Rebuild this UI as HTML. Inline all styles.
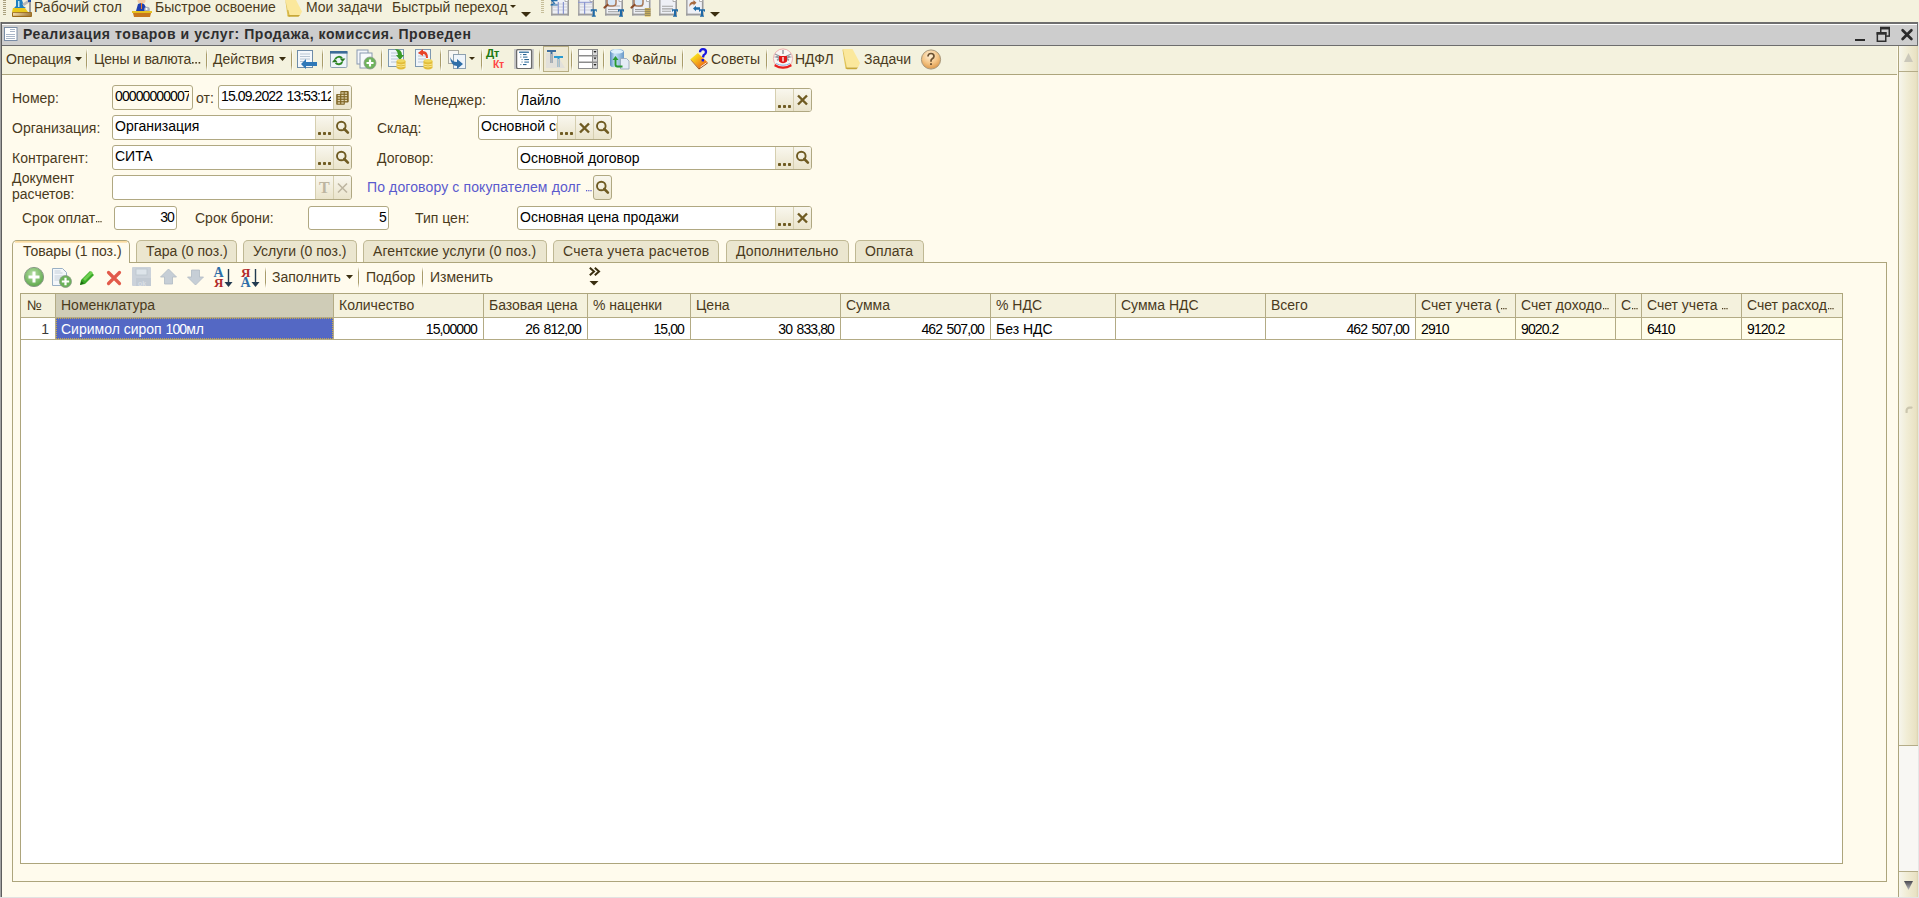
<!DOCTYPE html>
<html><head><meta charset="utf-8">
<style>
html,body{margin:0;padding:0;width:1919px;height:898px;overflow:hidden;background:#F4F2DE;position:relative}
*{box-sizing:border-box}
.a{position:absolute}
.t{position:absolute;font-family:"Liberation Sans",sans-serif;font-size:14px;line-height:16px;white-space:nowrap;color:#4A3A1C}
.v{color:#000}
.n{letter-spacing:-0.9px;word-spacing:1.5px}
.f{position:absolute;border:1px solid #B0A882;border-radius:3px;background:#fff;overflow:hidden}
.fb{position:absolute;top:0;bottom:0;width:19px;border-left:1px solid #D6CFB0;background:linear-gradient(#F9F7EE,#EAE4CC)}
.sep{position:absolute;width:1px;background:linear-gradient(rgba(170,156,106,0),#A99C6A 25%,#A99C6A 75%,rgba(170,156,106,0));box-shadow:1px 0 0 rgba(255,255,255,0.55)}
.tab{position:absolute;top:240px;height:23px;border:1px solid #BFB893;border-bottom:none;border-radius:5px 5px 0 0;background:#EBE6CF}
.th{position:absolute;top:294px;height:23px;background:#F4F1DD}
.cl{position:absolute;width:1px;background:#B3AB85}
</style></head><body>

<!-- ===== top toolbar ===== -->
<div class="a" style="left:0;top:0;width:1919px;height:22px;background:#F4F2DE"></div>
<!-- grip -->
<svg class="a" style="left:3px;top:0" width="3" height="17"><g fill="#A9A07E"><rect y="0" width="3" height="1"/><rect y="2" width="3" height="1"/><rect y="4" width="3" height="1"/><rect y="6" width="3" height="1"/><rect y="8" width="3" height="1"/><rect y="10" width="3" height="1"/><rect y="12" width="3" height="1"/><rect y="14" width="3" height="1"/></g></svg>
<!-- desk icon -->
<svg class="a" style="left:12px;top:0" width="20" height="18" viewBox="0 0 20 18">
  <path d="M4 0h6l1 3v3l3 2H2l2-2V3z" fill="#1E7FC0"/>
  <path d="M6 1h1.5v6H6z" fill="#BFE6F5"/>
  <path d="M10 4l6-4h2v2l-6 4z" fill="#B8B8B8"/>
  <rect x="16" y="0" width="3" height="2" fill="#1E4FA8"/>
  <rect x="17" y="2" width="2" height="10" fill="#9C9C9C"/>
  <path d="M1 8h12l3 4H0z" fill="#E8C81C"/>
  <defs><linearGradient id="dbg" x1="0" x2="1"><stop offset="0" stop-color="#F0D8A8"/><stop offset="1" stop-color="#A07838"/></linearGradient></defs><rect x="0" y="12" width="20" height="5" rx="1" fill="#9A6A18"/><rect x="1" y="12.8" width="18.5" height="3" fill="url(#dbg)"/>
</svg>
<div class="t" style="left:34px;top:-1px">Рабочий стол</div>
<!-- operator icon -->
<svg class="a" style="left:132px;top:0" width="21" height="18" viewBox="0 0 21 18">
  <ellipse cx="9.5" cy="1" rx="4" ry="2.5" fill="#F2C9A0"/>
  <path d="M4 11l2-7 3-1 3 1 3 5-1 3z" fill="#1F3FB0"/>
  <rect x="9" y="3" width="1" height="6" fill="#F07A20"/>
  <circle cx="15" cy="9.5" r="2.8" fill="#A8AEBA"/><circle cx="14.5" cy="9" r="1.1" fill="#FFFFFF"/>
  <path d="M0 11h20v2H0z" fill="#E6C020"/>
  <path d="M1 13h18l-1 4H2z" fill="#C8781E"/>
</svg>
<div class="t" style="left:155px;top:-1px">Быстрое освоение</div>
<!-- notes icon -->
<svg class="a" style="left:284px;top:0" width="21" height="18" viewBox="0 0 21 18">
  <path d="M1 -2h10l7 13.5-2 4H5z" fill="#FBE89C"/>
  <path d="M1 -2l4 17.5 1.5 1.5-3-0.5z" fill="#E2C558"/>
  <path d="M3.5 15.5l1.5-0.5h11l-1.5 1.8H5z" fill="#C8A838"/>
  <path d="M5 15l-1.2-5" stroke="#D0B040" stroke-width="1"/>
</svg>
<div class="t" style="left:306px;top:-1px">Мои задачи</div>
<div class="t" style="left:392px;top:-1px">Быстрый переход</div>
<svg class="a" style="left:510px;top:5px" width="6" height="3"><path d="M0 0h6L3 3z" fill="#3A2E10"/></svg>
<svg class="a" style="left:521px;top:12px" width="10" height="5"><path d="M0 0h10L5 5z" fill="#3A2E10"/></svg>
<svg class="a" style="left:541px;top:0" width="3" height="15"><g fill="#C6BE9A"><rect y="0" width="3" height="1"/><rect y="2" width="3" height="1"/><rect y="4" width="3" height="1"/><rect y="6" width="3" height="1"/><rect y="8" width="3" height="1"/><rect y="10" width="3" height="1"/><rect y="12" width="3" height="1"/></g></svg>
<!-- report icons -->
<svg class="a" style="left:545px;top:0" width="180" height="20" viewBox="0 0 180 20">
<rect x="6" y="-2" width="18" height="17.5" fill="#EEF0F6"/><rect x="6" y="-2" width="1.6" height="17.5" fill="#A8A8A8"/><rect x="6" y="13.6" width="18" height="1.9" fill="#9C9C9C"/><rect x="22.4" y="0" width="1.6" height="15.5" fill="#9A9A9A"/><path d="M20 -2v3.5h3.5" fill="#FFFFFF" stroke="#A0A0A0" stroke-width="0.8"/>
<path d="M8 4h14M8 7h14M8 10h14" stroke="#C8CAD2" stroke-width="0.9"/><rect x="12.7" y="2" width="1.2" height="12" fill="#8A96D0"/><rect x="17.8" y="2" width="1.2" height="12" fill="#8A96D0"/>
<path d="M6 0h6.5v1.2H8.2l2.3 2.2-2.8 1.2h5v0.8H5.5v-0.9l3.3-1.3L5.8 0.3z" fill="#1F6AA6"/>
<rect x="33" y="-2" width="16" height="17.5" fill="#EEF0F6"/><rect x="33" y="-2" width="1.6" height="17.5" fill="#A8A8A8"/><rect x="33" y="13.6" width="16" height="1.9" fill="#9C9C9C"/><rect x="47.4" y="0" width="1.6" height="15.5" fill="#9A9A9A"/><path d="M45 -2v3.5h3.5" fill="#FFFFFF" stroke="#A0A0A0" stroke-width="0.8"/>
<path d="M35 4h12M35 7h12M35 10h12" stroke="#C8CAD2" stroke-width="0.9"/><rect x="39" y="2" width="1.2" height="12" fill="#8A96D0"/><rect x="33" y="1.8" width="14" height="1" fill="#8A96D0"/>
<path d="M45.8 9.2 L51.8 9.2 L51.8 11.8 L51.1 11.8 L50.8 10.8 L49.8 10.8 L49.8 15.4 L50.8 15.4 L50.8 16.8 L46.8 16.8 L46.8 15.4 L47.8 15.4 L47.8 10.8 L46.8 10.8 L46.5 11.8 L45.8 11.8z" fill="#1F6AA6"/>
<rect x="60" y="-2" width="18" height="17.5" fill="#EEF0F6"/><rect x="60" y="-2" width="1.6" height="17.5" fill="#A8A8A8"/><rect x="60" y="13.6" width="18" height="1.9" fill="#9C9C9C"/><rect x="76.4" y="0" width="1.6" height="15.5" fill="#9A9A9A"/><path d="M74 -2v3.5h3.5" fill="#FFFFFF" stroke="#A0A0A0" stroke-width="0.8"/>
<path d="M63 9.5h12M63 11.8h12" stroke="#9C9C9C" stroke-width="1.1"/><path d="M70 6h5" stroke="#B0B0B0"/>
<path d="M62 -1v4q0 3 3 3h3q3 0 3-3v-4" fill="#D8E8F8" stroke="#A87858" stroke-width="1.5"/><path d="M62.5 5l-3 2.5" stroke="#8A4A28" stroke-width="2.2" stroke-linecap="round"/>
<path d="M73.0 9.2 L79.0 9.2 L79.0 11.8 L78.3 11.8 L78.0 10.8 L77.0 10.8 L77.0 15.4 L78.0 15.4 L78.0 16.8 L74.0 16.8 L74.0 15.4 L75.0 15.4 L75.0 10.8 L74.0 10.8 L73.7 11.8 L73.0 11.8z" fill="#1F6AA6"/>
<rect x="87" y="-2" width="18.5" height="17.5" fill="#EEF0F6"/><rect x="87" y="-2" width="1.6" height="17.5" fill="#A8A8A8"/><rect x="87" y="13.6" width="18.5" height="1.9" fill="#9C9C9C"/><rect x="103.9" y="0" width="1.6" height="15.5" fill="#9A9A9A"/><path d="M101.5 -2v3.5h3.5" fill="#FFFFFF" stroke="#A0A0A0" stroke-width="0.8"/>
<path d="M90 9.5h10M90 11.3h10M93 6h5" stroke="#9C9C9C" stroke-width="1"/>
<path d="M89 -1v4q0 3 3 3h3q3 0 3-3v-4" fill="#D8E8F8" stroke="#A87858" stroke-width="1.5"/><path d="M89.5 5l-3 2.5" stroke="#8A4A28" stroke-width="2.2" stroke-linecap="round"/>
<rect x="99.8" y="8" width="5.7" height="8.6" fill="#E8C860"/><path d="M99.8 9.2h5.7M99.8 11.2h5.7M99.8 13.2h5.7M99.8 15.2h5.7" stroke="#5A5A5A" stroke-width="0.8"/>
<rect x="114" y="-2" width="18" height="17.5" fill="#EEF0F6"/><rect x="114" y="-2" width="1.6" height="17.5" fill="#A8A8A8"/><rect x="114" y="13.6" width="18" height="1.9" fill="#9C9C9C"/><rect x="130.4" y="0" width="1.6" height="15.5" fill="#9A9A9A"/><path d="M128 -2v3.5h3.5" fill="#FFFFFF" stroke="#A0A0A0" stroke-width="0.8"/>
<path d="M117 6.3h11M117 8.9h11M117 11.2h9" stroke="#A4A4A4" stroke-width="1.1"/>
<path d="M127.0 9.2 L133.0 9.2 L133.0 11.8 L132.3 11.8 L132.0 10.8 L131.0 10.8 L131.0 15.4 L132.0 15.4 L132.0 16.8 L128.0 16.8 L128.0 15.4 L129.0 15.4 L129.0 10.8 L128.0 10.8 L127.7 11.8 L127.0 11.8z" fill="#1F6AA6"/>
<rect x="141" y="-2" width="17.5" height="17.5" fill="#EEF0F6"/><rect x="141" y="-2" width="1.6" height="17.5" fill="#A8A8A8"/><rect x="141" y="13.6" width="17.5" height="1.9" fill="#9C9C9C"/><rect x="156.9" y="0" width="1.6" height="15.5" fill="#9A9A9A"/><path d="M154.5 -2v3.5h3.5" fill="#FFFFFF" stroke="#A0A0A0" stroke-width="0.8"/>
<path d="M144.5 7q-1-5 4-5.5v-1.5l3 2.8-3 2.6v-1.4q-3 0-4 3z" fill="#A86A40"/>
<path d="M148 8.5l3-2.8v1.6h4v2.5h-4v1.5z" fill="#1F6AA6"/>
<path d="M154.0 9.2 L160.0 9.2 L160.0 11.8 L159.3 11.8 L159.0 10.8 L158.0 10.8 L158.0 15.4 L159.0 15.4 L159.0 16.8 L155.0 16.8 L155.0 15.4 L156.0 15.4 L156.0 10.8 L155.0 10.8 L154.7 11.8 L154.0 11.8z" fill="#1F6AA6"/>
<path d="M165 12h10l-5 4.8z" fill="#3A2E10"/>
</svg>

<!-- ===== window frame ===== -->
<div class="a" style="left:0;top:22px;width:1918px;height:876px;background:#FFFBED"></div>
<div class="a" style="left:0;top:22px;width:1918px;height:2px;background:#6E6E6E"></div>
<div class="a" style="left:2px;top:24px;width:1915px;height:1px;background:#FFFFFF"></div>
<div class="a" style="left:2px;top:25px;width:1915px;height:20px;background:#CDCDCD"></div>
<div class="a" style="left:0;top:45px;width:1918px;height:1px;background:#6D6D6D"></div>
<div class="a" style="left:0;top:22px;width:1px;height:876px;background:#A2A2A2"></div>
<div class="a" style="left:1px;top:22px;width:1px;height:876px;background:#5E5E5E"></div>
<div class="a" style="left:1917px;top:22px;width:1px;height:24px;background:#6E6E6E"></div>
<div class="a" style="left:1918px;top:22px;width:1px;height:876px;background:#E6E6E6"></div>
<div class="a" style="left:0;top:897px;width:1919px;height:1px;background:#E2E2E2"></div>
<!-- title icon -->
<svg class="a" style="left:4px;top:27px" width="14" height="14" viewBox="0 0 14 14">
  <rect x="0.5" y="0.5" width="12.5" height="13" fill="#FFFFFF" stroke="#7A8DA6"/>
  <rect x="6" y="2" width="5" height="1" fill="#A9B6C8"/>
  <rect x="6" y="4" width="5" height="1" fill="#A9B6C8"/>
  <rect x="2" y="7" width="9" height="1" fill="#A9B6C8"/>
  <rect x="2" y="9" width="9" height="1" fill="#A9B6C8"/>
  <rect x="2" y="11" width="9" height="1" fill="#A9B6C8"/>
</svg>
<div class="t" style="left:23px;top:26px;font-weight:bold;color:#2E2E2E;letter-spacing:0.56px">Реализация товаров и услуг: Продажа, комиссия. Проведен</div>
<!-- window controls -->
<div class="a" style="left:1855px;top:39px;width:10px;height:2px;background:#2A2A2A"></div>
<svg class="a" style="left:1876px;top:26px" width="15" height="17" viewBox="0 0 15 17">
  <rect x="4.75" y="1.6" width="8.5" height="8.5" fill="none" stroke="#2E2E2E" stroke-width="1.5"/>
  <rect x="4" y="0.85" width="10" height="2.6" fill="#2E2E2E"/>
  <rect x="1.35" y="6.85" width="8.4" height="8.4" fill="#CDCDCD" stroke="#2E2E2E" stroke-width="1.5"/>
  <rect x="0.6" y="6.1" width="9.9" height="2.6" fill="#2E2E2E"/>
</svg>
<svg class="a" style="left:1900px;top:28px" width="14" height="13" viewBox="0 0 14 13"><path d="M2.6 2.2l8.8 8.8M11.4 2.2l-8.8 8.8" stroke="#2A2A2A" stroke-width="2.7" stroke-linecap="round"/></svg>

<!-- ===== command bar ===== -->
<div class="a" style="left:2px;top:46px;width:1896px;height:28px;background:#F4F2DE"></div>
<div class="a" style="left:2px;top:74px;width:1895px;height:1px;background:#ADA57C"></div>
<div class="t" style="left:6px;top:51px">Операция</div>
<svg class="a" style="left:75px;top:57px" width="7" height="4"><path d="M0 0h7L3.5 4z" fill="#3A2E10"/></svg>
<div class="sep" style="left:86px;top:49px;height:22px"></div>
<div class="t" style="left:94px;top:51px;letter-spacing:-0.15px">Цены и валюта<svg style="margin-left:1px" width="9" height="2"><g fill="#4A3A1C"><rect x="0" y="0" width="1.6" height="1.6"/><rect x="3.3" y="0" width="1.6" height="1.6"/><rect x="6.6" y="0" width="1.6" height="1.6"/></g></svg></div>
<div class="sep" style="left:206px;top:49px;height:22px"></div>
<div class="t" style="left:213px;top:51px">Действия</div>
<svg class="a" style="left:279px;top:57px" width="7" height="4"><path d="M0 0h7L3.5 4z" fill="#3A2E10"/></svg>
<div class="sep" style="left:291px;top:49px;height:22px"></div>
<svg class="a" style="left:296px;top:49px" width="24" height="22" viewBox="0 0 24 22">
  <rect x="1.5" y="1.5" width="15" height="17" fill="#F4F8FC" stroke="#6E8CA8"/>
  <path d="M4 5h10M4 7.5h10M4 10h10M4 12.5h6" stroke="#B8C6D4"/>
  <path d="M5 15l5-5v3h11v4H10v3z" fill="#2F78B8"/>
</svg>
<div class="sep" style="left:322px;top:49px;height:22px"></div>
<svg class="a" style="left:329px;top:50px" width="20" height="19" viewBox="0 0 20 19">
  <rect x="1.5" y="1.5" width="16.5" height="16" rx="1.2" fill="#EEF4FA" stroke="#8CA0B0"/>
  <rect x="1" y="1" width="17.5" height="2.6" fill="#3C6C98"/>
  <path d="M6.3 9.2A4 4 0 0 1 13 8.2" stroke="#2E8A26" stroke-width="1.9" fill="none"/>
  <path d="M10.8 8.6h5.6l-2.8 3.4z" fill="#2A7A20"/>
  <path d="M13.2 12A4 4 0 0 1 6.6 12.9" stroke="#2E8A26" stroke-width="1.9" fill="none"/>
  <path d="M3 12.2h5.6l-2.8-3.4z" fill="#2A7A20"/>
</svg>
<svg class="a" style="left:356px;top:49px" width="22" height="21" viewBox="0 0 22 21">
  <rect x="1" y="1" width="11" height="14" fill="#F4F6FA" stroke="#8A9AB0"/>
  <rect x="4" y="4" width="12" height="15" fill="#F8FAFC" stroke="#8A9AB0"/>
  <circle cx="14" cy="14" r="6" fill="#6DB35A" stroke="#8A9A8A" stroke-width="0.8"/>
  <path d="M14 10.5v7M10.5 14h7" stroke="#fff" stroke-width="2.2"/>
</svg>
<div class="sep" style="left:381px;top:49px;height:22px"></div>
<svg class="a" style="left:387px;top:48px" width="21" height="22" viewBox="0 0 21 22">
  <rect x="1.5" y="1.5" width="15" height="17" fill="#F0F5FA" stroke="#7E98B0"/>
  <path d="M4 5h8M4 8h8M4 11h8M4 14h8" stroke="#B8C6D4"/>
  <path d="M8 1q7 0 7 6h2l-4 5-4-5h2q0-3-3-6z" fill="#3A9A28"/>
  <ellipse cx="14" cy="13" rx="4.5" ry="2" fill="#F0D860"/>
  <path d="M9.5 13v7q4.5 3 9 0v-7q-4.5 3-9 0z" fill="#E2BC38"/>
  <path d="M9.5 16q4.5 2 9 0M9.5 18q4.5 2 9 0" stroke="#FFF0A0" stroke-width="0.8" fill="none"/>
</svg>
<svg class="a" style="left:414px;top:48px" width="21" height="22" viewBox="0 0 21 22">
  <rect x="1.5" y="1.5" width="15" height="17" fill="#F0F5FA" stroke="#7E98B0"/>
  <path d="M4 5h8M4 8h8M4 11h8M4 14h8" stroke="#B8C6D4"/>
  <path d="M4 5l5-4v2q5 0 5 7h-2q0-4-3-4v2z" fill="#E84428"/>
  <ellipse cx="14" cy="13" rx="4.5" ry="2" fill="#F0D860"/>
  <path d="M9.5 13v7q4.5 3 9 0v-7q-4.5 3-9 0z" fill="#E2BC38"/>
  <path d="M9.5 16q4.5 2 9 0M9.5 18q4.5 2 9 0" stroke="#FFF0A0" stroke-width="0.8" fill="none"/>
</svg>
<div class="sep" style="left:440px;top:49px;height:22px"></div>
<svg class="a" style="left:447px;top:49px" width="30" height="21" viewBox="0 0 30 21">
  <rect x="1.5" y="1.5" width="10" height="13" fill="#F6F6F4" stroke="#A8A8A0"/>
  <rect x="6.5" y="5.5" width="12" height="14" fill="#EEF4FA" stroke="#8CA0B0"/>
  <path d="M3 8q2 5 7 5v-3l6 5-6 5v-3q-6 0-7-9z" fill="#2F6FA8"/>
  <path d="M22 8h6l-3 3z" fill="#3A2E10"/>
</svg>
<div class="sep" style="left:481px;top:49px;height:22px"></div>
<div class="a" style="left:486px;top:47px;font:bold 11.5px/12px 'Liberation Sans';color:#207A12;letter-spacing:-0.5px">Дт</div>
<div class="a" style="left:493px;top:59px;font:bold 10.5px/11px 'Liberation Sans';color:#FF4646;letter-spacing:-0.3px">Кт</div>
<svg class="a" style="left:514px;top:49px" width="20" height="20" viewBox="0 0 20 20">
  <rect x="0" y="0" width="20" height="20" fill="#C8C8C8"/>
  <rect x="2.6" y="0.6" width="15" height="19" rx="1.5" fill="#FFFFFF" stroke="#6A6A6A" stroke-width="1.3"/>
  <rect x="5" y="2.4" width="10" height="1.6" rx="0.6" fill="#4A80A8"/>
  <g fill="#2A6490"><rect x="6" y="5" width="1.5" height="1.1" fill="#8AAAC0"/><rect x="9" y="5" width="3.5" height="1.1"/>
  <rect x="6" y="7.5" width="1.5" height="1.1" fill="#8AAAC0"/><rect x="9" y="7.5" width="4.5" height="1.2" fill="#4A80A8"/>
  <rect x="7.3" y="10" width="1.5" height="1.1" fill="#8AAAC0"/><rect x="10.3" y="10" width="4.7" height="1.1"/>
  <rect x="7.3" y="12.5" width="1.5" height="1.1" fill="#8AAAC0"/><rect x="10.3" y="12.5" width="4.7" height="1.2" fill="#4A80A8"/>
  <rect x="6" y="15" width="1.5" height="1.1" fill="#8AAAC0"/><rect x="9" y="15" width="3.5" height="1.1"/></g>
</svg>
<div class="sep" style="left:539px;top:49px;height:22px"></div>
<div class="a" style="left:543px;top:46px;width:26px;height:26px;border:1px solid #B8AE84;background:#EEE9D4"></div>
<svg class="a" style="left:546px;top:49px" width="20" height="20" viewBox="0 0 20 20">
  <path d="M0 4h10l9 15H0z" fill="#E2E0DA"/>
  <path d="M1 1h9v2H6.5v11H4.5V3H1z" fill="#3E6E9E"/>
  <rect x="4.5" y="5" width="2" height="9" fill="#B4B4B4"/>
  <path d="M8 7h9v2h-3.5v9h-2V9H8z" fill="#2A9AD0"/>
  <rect x="11.5" y="10" width="2" height="8" fill="#C4C4C4"/>
</svg>
<div class="sep" style="left:571px;top:49px;height:22px"></div>
<svg class="a" style="left:578px;top:49px" width="20" height="20" viewBox="0 0 20 20">
  <rect x="0" y="0" width="20" height="20" fill="#8C8C8C"/>
  <rect x="1" y="1" width="13" height="5" fill="#FFFFFF"/><rect x="15" y="1" width="4" height="5" fill="#D8D8D8"/>
  <rect x="1" y="7.5" width="13" height="5" fill="#FFFFFF"/><rect x="15" y="7.5" width="4" height="5" fill="#D8D8D8"/>
  <rect x="1" y="14" width="13" height="5" fill="#FFFFFF"/><rect x="15" y="14" width="4" height="5" fill="#D8D8D8"/>
  <path d="M15.5 2h3l-1.5 2zM15.5 8.5h3l-1.5 2zM15.5 15h3l-1.5 2z" fill="#202020"/>
</svg>
<div class="sep" style="left:603px;top:49px;height:22px"></div>
<svg class="a" style="left:609px;top:48px" width="22" height="22" viewBox="0 0 22 22">
  <defs><linearGradient id="cyl" x1="0" x2="1"><stop offset="0" stop-color="#5A8CC0"/><stop offset="0.35" stop-color="#C8E4F8"/><stop offset="1" stop-color="#6A9AC8"/></linearGradient></defs>
  <path d="M1 4q0-3 7-3t7 3v13q0 2.5-7 2.5t-7-2.5z" fill="url(#cyl)"/>
  <ellipse cx="8" cy="3.6" rx="6.3" ry="2" fill="#DDF0FC"/>
  <path d="M11.5 10.5h6l2.5 2.5v8h-8.5z" fill="#E4ECF6" stroke="#98AABC" stroke-width="0.9"/>
  <path d="M6.5 11v5.5q0 2 2 2h5" stroke="#2A9A30" stroke-width="1.9" fill="none"/>
  <path d="M3.5 12l3-4 3 4z" fill="#2A9A30"/>
</svg>
<div class="t" style="left:632px;top:51px">Файлы</div>
<div class="sep" style="left:682px;top:49px;height:22px"></div>
<svg class="a" style="left:689px;top:48px" width="20" height="22" viewBox="0 0 20 22">
  <defs><linearGradient id="bk" x1="0" y1="0" x2="1" y2="1"><stop offset="0.2" stop-color="#F8E020"/><stop offset="0.75" stop-color="#F07818"/></linearGradient></defs>
  <path d="M8.8 4.9L1.4 11.2 10 20.3l8.6-6z" fill="url(#bk)"/>
  <path d="M1.4 11.2l0.8 1.6 7.8 8.7 8.6-6-0.0-1.2-8.6 6z" fill="#9A4A10"/>
  <path d="M11.5 19l6-4.2" stroke="#F8E8D8" stroke-width="1"/>
  <path d="M11 4.2q0-3 3-3t3 2.8q0 2-2.4 3.2l-0.6 2.2" stroke="#1818E0" stroke-width="2.3" fill="none"/>
  <rect x="12.6" y="11" width="2.4" height="2.4" fill="#1818E0"/>
</svg>
<div class="t" style="left:711px;top:51px">Советы</div>
<div class="sep" style="left:766px;top:49px;height:22px"></div>
<svg class="a" style="left:772px;top:48px" width="22" height="22" viewBox="0 0 22 22">
  <circle cx="11" cy="10.5" r="9.6" fill="#F8F6F4" stroke="#F0B0B0" stroke-width="1"/>
  <path d="M3 6l4 2-3 1 4 1-3 2 5-1M19 6l-4 2 3 1-4 1 3 2-5-1" stroke="#9A9AA0" stroke-width="1.3" fill="none"/>
  <path d="M11 2v4" stroke="#9A9AA0" stroke-width="1.5"/>
  <path d="M7 8h8v5.5q-4 3.5-8 0z" fill="#E01818"/>
  <path d="M11 9v4.5" stroke="#FFFFFF" stroke-width="1.3"/>
  <path d="M3 16q8 5 16 0l0.8 2.2q-8.8 5-17.6 0z" fill="#E82020"/>
  <path d="M4 15.5q7 3.5 14 0" stroke="#8AB0E0" stroke-width="1" fill="none"/>
</svg>
<div class="t" style="left:795px;top:51px">НДФЛ</div>
<svg class="a" style="left:842px;top:48px" width="21" height="22" viewBox="0 0 21 22">
  <path d="M1 1h9.5l7.5 14-2 4.5H5z" fill="#FBE89C"/>
  <path d="M1 1l4 18.5 1.5 1.5-3-0.5L0.5 2z" fill="#E2C558"/>
  <path d="M3.5 20l1.5-0.6h11l-1.5 1.8H5z" fill="#C8A838"/>
</svg>
<div class="t" style="left:864px;top:51px">Задачи</div>
<svg class="a" style="left:920px;top:49px" width="22" height="21" viewBox="0 0 22 21">
  <defs><radialGradient id="hg" cx="0.45" cy="0.3" r="0.75"><stop offset="0" stop-color="#FDF0D8"/><stop offset="0.55" stop-color="#F4C484"/><stop offset="1" stop-color="#D89040"/></radialGradient></defs>
  <circle cx="11" cy="10.5" r="9.6" fill="url(#hg)" stroke="#A8987C" stroke-width="1"/>
  <path d="M8 7.5q0-3 3-3t3 2.8q0 1.7-2 2.6-1 0.5-1 2v0.8" stroke="#6A5030" stroke-width="1.7" fill="none"/>
  <rect x="10.1" y="14.2" width="1.8" height="1.8" fill="#6A5030"/>
</svg>

<!-- ===== form fields ===== -->
<div id="fields">
<div class="t" style="left:12px;top:90px;">Номер:</div>
<div class="t" style="left:196px;top:90px;">от:</div>
<div class="t" style="left:414px;top:92px;">Менеджер:</div>
<div class="t" style="left:12px;top:120px;">Организация:</div>
<div class="t" style="left:377px;top:120px;">Склад:</div>
<div class="t" style="left:12px;top:150px;">Контрагент:</div>
<div class="t" style="left:377px;top:150px;">Договор:</div>
<div class="t" style="left:12px;top:170px;">Документ</div>
<div class="t" style="left:12px;top:186px;">расчетов:</div>
<div class="t" style="left:367px;top:179px;color:#5A5ACD;letter-spacing:0.12px">По договору с покупателем долг <svg style="margin-left:1px" width="6" height="2"><g fill="#5A5ACD"><rect x="0" y="0" width="1.2" height="1.3"/><rect x="2.2" y="0" width="1.2" height="1.3"/><rect x="4.4" y="0" width="1.2" height="1.3"/></g></svg></div>
<div class="t" style="left:22px;top:210px;">Срок оплат<svg style="margin-left:1px" width="6" height="2"><g fill="#4A3A1C"><rect x="0" y="0" width="1.2" height="1.3"/><rect x="2.2" y="0" width="1.2" height="1.3"/><rect x="4.4" y="0" width="1.2" height="1.3"/></g></svg></div>
<div class="t" style="left:195px;top:210px;">Срок брони:</div>
<div class="t" style="left:415px;top:210px;">Тип цен:</div>
<div class="f" style="left:112px;top:85px;width:81px;height:25px;background:#FFFBED"><div class="t v n" style="left:2px;top:2px;width:74px;overflow:hidden">00000000007</div></div>
<div class="f" style="left:218px;top:85px;width:134px;height:25px;background:#fff"><div class="t v n" style="left:2px;top:2px;width:110px;overflow:hidden">15.09.2022 13:53:12</div><div class="fb" style="left:114px;width:18px"></div><svg class="a" style="left:116px;top:4px" width="15" height="16" viewBox="0 0 15 16"><rect x="1.2" y="4" width="8.6" height="10.7" rx="0.8" fill="#7E6424"/><rect x="5.3" y="1" width="8.4" height="11.4" rx="0.8" fill="#7E6424"/><rect x="6.3" y="2.35" width="2.4" height="1.3" fill="#E2D8B4"/><rect x="9.7" y="2.35" width="2.4" height="1.3" fill="#E2D8B4"/><rect x="2.7" y="4.85" width="2.4" height="1.3" fill="#E2D8B4"/><rect x="6.3" y="4.85" width="2.4" height="1.3" fill="#E2D8B4"/><rect x="9.7" y="4.85" width="2.4" height="1.3" fill="#E2D8B4"/><rect x="2.7" y="7.35" width="2.4" height="1.3" fill="#E2D8B4"/><rect x="6.3" y="7.35" width="2.4" height="1.3" fill="#E2D8B4"/><rect x="9.7" y="7.35" width="2.4" height="1.3" fill="#E2D8B4"/><rect x="2.7" y="9.85" width="2.4" height="1.3" fill="#E2D8B4"/><rect x="6.3" y="9.85" width="2.4" height="1.3" fill="#E2D8B4"/><rect x="9.7" y="9.85" width="2.4" height="1.3" fill="#E2D8B4"/><rect x="2.7" y="12.35" width="2.4" height="1.3" fill="#E2D8B4"/><rect x="6.3" y="12.35" width="2.4" height="1.3" fill="#E2D8B4"/></svg></div>
<div class="f" style="left:517px;top:88px;width:295px;height:24px;background:#fff"><div class="t v" style="left:2px;top:3px;width:291px;overflow:hidden">Лайло</div><div class="fb" style="left:257px;width:18px"></div><svg class="a" style="left:260px;top:16px" width="13" height="3"><g fill="#6F5B22"><rect x="0" y="0" width="3" height="3" rx="0.8"/><rect x="5" y="0" width="3" height="3" rx="0.8"/><rect x="10" y="0" width="3" height="3" rx="0.8"/></g></svg><div class="fb" style="left:275px;width:18px"></div><svg class="a" style="left:276px;top:5px" width="17" height="12" viewBox="0 0 17 12"><path d="M4 1.5l9 9M13 1.5l-9 9" stroke="#6F5B22" stroke-width="2.4"/></svg></div>
<div class="f" style="left:112px;top:115px;width:240px;height:25px;background:#fff"><div class="t v" style="left:2px;top:2px;width:236px;overflow:hidden">Организация</div><div class="fb" style="left:202px;width:18px"></div><svg class="a" style="left:205px;top:16px" width="13" height="3"><g fill="#6F5B22"><rect x="0" y="0" width="3" height="3" rx="0.8"/><rect x="5" y="0" width="3" height="3" rx="0.8"/><rect x="10" y="0" width="3" height="3" rx="0.8"/></g></svg><div class="fb" style="left:220px;width:18px"></div><svg class="a" style="left:221px;top:3px" width="17" height="17" viewBox="0 0 17 17"><circle cx="7.3" cy="7" r="4.3" fill="none" stroke="#6F5B22" stroke-width="1.9"/><path d="M10.3 10l3.6 3.6" stroke="#6F5B22" stroke-width="2.6" stroke-linecap="round"/></svg></div>
<div class="f" style="left:478px;top:115px;width:134px;height:25px;background:#fff"><div class="t v" style="left:2px;top:2px;width:77px;overflow:hidden">Основной склад</div><div class="fb" style="left:78px;width:18px"></div><svg class="a" style="left:81px;top:16px" width="13" height="3"><g fill="#6F5B22"><rect x="0" y="0" width="3" height="3" rx="0.8"/><rect x="5" y="0" width="3" height="3" rx="0.8"/><rect x="10" y="0" width="3" height="3" rx="0.8"/></g></svg><div class="fb" style="left:96px;width:18px"></div><svg class="a" style="left:97px;top:6px" width="17" height="12" viewBox="0 0 17 12"><path d="M4 1.5l9 9M13 1.5l-9 9" stroke="#6F5B22" stroke-width="2.4"/></svg><div class="fb" style="left:114px;width:18px"></div><svg class="a" style="left:115px;top:3px" width="17" height="17" viewBox="0 0 17 17"><circle cx="7.3" cy="7" r="4.3" fill="none" stroke="#6F5B22" stroke-width="1.9"/><path d="M10.3 10l3.6 3.6" stroke="#6F5B22" stroke-width="2.6" stroke-linecap="round"/></svg></div>
<div class="f" style="left:112px;top:145px;width:240px;height:25px;background:#fff"><div class="t v" style="left:2px;top:2px;width:236px;overflow:hidden">СИТА</div><div class="fb" style="left:202px;width:18px"></div><svg class="a" style="left:205px;top:16px" width="13" height="3"><g fill="#6F5B22"><rect x="0" y="0" width="3" height="3" rx="0.8"/><rect x="5" y="0" width="3" height="3" rx="0.8"/><rect x="10" y="0" width="3" height="3" rx="0.8"/></g></svg><div class="fb" style="left:220px;width:18px"></div><svg class="a" style="left:221px;top:3px" width="17" height="17" viewBox="0 0 17 17"><circle cx="7.3" cy="7" r="4.3" fill="none" stroke="#6F5B22" stroke-width="1.9"/><path d="M10.3 10l3.6 3.6" stroke="#6F5B22" stroke-width="2.6" stroke-linecap="round"/></svg></div>
<div class="f" style="left:517px;top:146px;width:295px;height:24px;background:#fff"><div class="t v" style="left:2px;top:3px;width:291px;overflow:hidden">Основной договор</div><div class="fb" style="left:257px;width:18px"></div><svg class="a" style="left:260px;top:16px" width="13" height="3"><g fill="#6F5B22"><rect x="0" y="0" width="3" height="3" rx="0.8"/><rect x="5" y="0" width="3" height="3" rx="0.8"/><rect x="10" y="0" width="3" height="3" rx="0.8"/></g></svg><div class="fb" style="left:275px;width:18px"></div><svg class="a" style="left:276px;top:2px" width="17" height="17" viewBox="0 0 17 17"><circle cx="7.3" cy="7" r="4.3" fill="none" stroke="#6F5B22" stroke-width="1.9"/><path d="M10.3 10l3.6 3.6" stroke="#6F5B22" stroke-width="2.6" stroke-linecap="round"/></svg></div>
<div class="f" style="left:112px;top:175px;width:240px;height:25px;background:#fff"><div class="fb" style="left:202px;width:18px"></div><div class="a" style="left:206px;top:3px;font:bold 16px/18px 'Liberation Serif';color:#BDB5A0">T</div><div class="fb" style="left:220px;width:18px"></div><svg class="a" style="left:221px;top:6px" width="17" height="12" viewBox="0 0 17 12"><path d="M4 1.5l9 9M13 1.5l-9 9" stroke="#BDB5A0" stroke-width="1.6"/></svg></div>
<div class="f" style="left:593px;top:175px;width:19px;height:25px;background:linear-gradient(#F9F7EE,#EAE4CC)"><svg class="a" style="left:0px;top:3px" width="17" height="17" viewBox="0 0 17 17"><circle cx="7.3" cy="7" r="4.3" fill="none" stroke="#6F5B22" stroke-width="1.9"/><path d="M10.3 10l3.6 3.6" stroke="#6F5B22" stroke-width="2.6" stroke-linecap="round"/></svg></div>
<div class="f" style="left:114px;top:206px;width:63px;height:24px;background:#fff"><div class="t v n" style="right:2px;top:2px">30</div></div>
<div class="f" style="left:308px;top:206px;width:81px;height:24px;background:#fff"><div class="t v n" style="right:2px;top:2px">5</div></div>
<div class="f" style="left:517px;top:206px;width:295px;height:24px;background:#fff"><div class="t v" style="left:2px;top:2px;width:291px;overflow:hidden">Основная цена продажи</div><div class="fb" style="left:257px;width:18px"></div><svg class="a" style="left:260px;top:16px" width="13" height="3"><g fill="#6F5B22"><rect x="0" y="0" width="3" height="3" rx="0.8"/><rect x="5" y="0" width="3" height="3" rx="0.8"/><rect x="10" y="0" width="3" height="3" rx="0.8"/></g></svg><div class="fb" style="left:275px;width:18px"></div><svg class="a" style="left:276px;top:5px" width="17" height="12" viewBox="0 0 17 12"><path d="M4 1.5l9 9M13 1.5l-9 9" stroke="#6F5B22" stroke-width="2.4"/></svg></div>
</div>

<!-- ===== tabs/table/scroll ===== -->
<div class="a" style="left:12px;top:262px;width:1875px;height:620px;border:1px solid #ADA57C"></div>
<div class="tab" style="left:136px;width:101px;height:22px"></div>
<div class="t" style="left:146px;top:243px;">Тара (0 поз.)</div>
<div class="tab" style="left:243px;width:114px;height:22px"></div>
<div class="t" style="left:253px;top:243px;">Услуги (0 поз.)</div>
<div class="tab" style="left:363px;width:184px;height:22px"></div>
<div class="t" style="left:373px;top:243px;letter-spacing:0.1px">Агентские услуги (0 поз.)</div>
<div class="tab" style="left:553px;width:166px;height:22px"></div>
<div class="t" style="left:563px;top:243px;letter-spacing:0.3px">Счета учета расчетов</div>
<div class="tab" style="left:726px;width:123px;height:22px"></div>
<div class="t" style="left:736px;top:243px;letter-spacing:0.13px">Дополнительно</div>
<div class="tab" style="left:855px;width:69px;height:22px"></div>
<div class="t" style="left:865px;top:243px;">Оплата</div>
<div class="a" style="left:12px;top:240px;width:118px;height:23px;border:1px solid #ADA57C;border-bottom:none;border-radius:5px 5px 0 0;background:#FFFBED"></div>
<div class="a" style="left:15px;top:241px;width:112px;height:2px;background:linear-gradient(#FBD894,#FCE9C4)"></div>
<div class="t" style="left:23px;top:243px;">Товары (1 поз.)</div>

<svg class="a" style="left:23px;top:266px" width="22" height="22" viewBox="0 0 22 22">
 <defs><radialGradient id="gadd" cx="0.45" cy="0.35" r="0.65"><stop offset="0" stop-color="#B8E0A8"/><stop offset="1" stop-color="#5EA84A"/></radialGradient></defs>
 <circle cx="11" cy="11" r="9.6" fill="url(#gadd)" stroke="#8A9A88" stroke-width="1"/>
 <path d="M11 5.5v11M5.5 11h11" stroke="#fff" stroke-width="3"/>
</svg>
<svg class="a" style="left:52px;top:268px" width="20" height="20" viewBox="0 0 20 20">
 <path d="M0.5 0.5h10l4 4v13h-14z" fill="#F4F7FA" stroke="#9AB0C4"/>
 <path d="M2.5 3h6M2.5 5h8M2.5 8h9M2.5 10h9M2.5 12h9" stroke="#C4CFDA"/>
 <circle cx="13.5" cy="13.5" r="6" fill="#6CB25A" stroke="#8A9A88" stroke-width="0.8"/>
 <path d="M13.5 9.8v7.4M9.8 13.5h7.4" stroke="#fff" stroke-width="2.2"/>
</svg>
<svg class="a" style="left:79px;top:269px" width="17" height="17" viewBox="0 0 17 17">
 <path d="M1 16l1-5 9-9 4 4-9 9z" fill="#3AA828"/>
 <path d="M4 10l8-8 2 2-8 8z" fill="#6ED050"/>
 <path d="M1 16l1.5-4 2.5 2.5z" fill="#1E6A14"/>
</svg>
<svg class="a" style="left:106px;top:270px" width="16" height="16" viewBox="0 0 16 16">
 <path d="M2.5 2.5l11 11M13.5 2.5l-11 11" stroke="#E25A4A" stroke-width="3.2" stroke-linecap="round"/>
</svg>
<svg class="a" style="left:132px;top:267px" width="20" height="20" viewBox="0 0 20 20">
 <rect x="0" y="0" width="19" height="19" rx="1" fill="#CBD2DA"/>
 <rect x="4" y="2" width="11" height="6" fill="#DDE4EA" stroke="#BCC5CE" stroke-width="0.8"/>
 <rect x="4" y="11" width="15" height="8" fill="#C2CAD3"/>
 <text x="6" y="18.5" font-family="Liberation Sans" font-size="7" font-weight="bold" fill="#D8DEE4">ok</text>
</svg>
<svg class="a" style="left:159px;top:268px" width="19" height="18" viewBox="0 0 19 18">
 <path d="M9.5 1l8 8h-4v7h-8v-7h-4z" fill="#C6CED6" stroke="#B0BAC4" stroke-width="0.8"/>
</svg>
<svg class="a" style="left:186px;top:268px" width="19" height="18" viewBox="0 0 19 18">
 <path d="M9.5 17l8-8h-4v-7h-8v7h-4z" fill="#C6CED6" stroke="#B0BAC4" stroke-width="0.8"/>
</svg>
<svg class="a" style="left:213px;top:266px" width="22" height="22" viewBox="0 0 22 22">
 <text x="0.5" y="11" font-family="Liberation Serif" font-weight="bold" font-size="14" fill="#2E6EA8">A</text>
 <text x="1" y="21" font-family="Liberation Serif" font-weight="bold" font-size="13" fill="#B02A2A">Я</text>
 <path d="M15.5 3v14" stroke="#223A50" stroke-width="1.4"/><path d="M11.5 16h8l-4 5z" fill="#223A50"/>
</svg>
<svg class="a" style="left:240px;top:266px" width="22" height="22" viewBox="0 0 22 22">
 <text x="1" y="11" font-family="Liberation Serif" font-weight="bold" font-size="13" fill="#B02A2A">Я</text>
 <text x="0.5" y="21" font-family="Liberation Serif" font-weight="bold" font-size="14" fill="#2E6EA8">A</text>
 <path d="M15.5 3v14" stroke="#223A50" stroke-width="1.4"/><path d="M11.5 16h8l-4 5z" fill="#223A50"/>
</svg>

<div class="sep" style="left:265px;top:267px;height:21px"></div>
<div class="t" style="left:272px;top:269px;">Заполнить</div>
<svg class="a" style="left:346px;top:275px" width="7" height="4"><path d="M0 0h7L3.5 4z" fill="#3A2E10"/></svg>
<div class="sep" style="left:358px;top:267px;height:21px"></div>
<div class="t" style="left:366px;top:269px;">Подбор</div>
<div class="sep" style="left:422px;top:267px;height:21px"></div>
<div class="t" style="left:430px;top:269px;">Изменить</div>
<svg class="a" style="left:588px;top:266px" width="13" height="21" viewBox="0 0 13 21"><path d="M1.8 1.8l4.2 3.7-4.2 3.7M6.8 1.8l4.2 3.7-4.2 3.7" stroke="#3A2E10" stroke-width="2" fill="none"/><path d="M1.5 15h9l-4.5 4.5z" fill="#3A2E10"/></svg>
<div class="a" style="left:20px;top:293px;width:1823px;height:571px;border:1px solid #ADA57C;background:#fff"></div>
<div class="a" style="left:21px;top:294px;width:1821px;height:23px;background:#F4F1DD"></div>
<div class="a" style="left:56px;top:294px;width:277px;height:23px;background:#CFCCB7"></div>
<div class="a" style="left:21px;top:317px;width:1821px;height:1px;background:#B3AB85"></div>
<div class="a" style="left:1416px;top:318px;width:426px;height:21px;background:#FFFDEA"></div>
<div class="a" style="left:21px;top:339px;width:1821px;height:1px;background:#B3AB85"></div>
<div class="cl" style="left:55px;top:294px;height:45px"></div>
<div class="cl" style="left:333px;top:294px;height:45px"></div>
<div class="cl" style="left:483px;top:294px;height:45px"></div>
<div class="cl" style="left:587px;top:294px;height:45px"></div>
<div class="cl" style="left:690px;top:294px;height:45px"></div>
<div class="cl" style="left:840px;top:294px;height:45px"></div>
<div class="cl" style="left:990px;top:294px;height:45px"></div>
<div class="cl" style="left:1115px;top:294px;height:45px"></div>
<div class="cl" style="left:1265px;top:294px;height:45px"></div>
<div class="cl" style="left:1415px;top:294px;height:45px"></div>
<div class="cl" style="left:1515px;top:294px;height:45px"></div>
<div class="cl" style="left:1615px;top:294px;height:45px"></div>
<div class="cl" style="left:1641px;top:294px;height:45px"></div>
<div class="cl" style="left:1741px;top:294px;height:45px"></div>
<div class="t" style="left:27px;top:297px;width:27px;overflow:hidden">№</div>
<div class="t" style="left:61px;top:297px;width:270px;overflow:hidden">Номенклатура</div>
<div class="t" style="left:339px;top:297px;width:142px;overflow:hidden">Количество</div>
<div class="t" style="left:489px;top:297px;width:96px;overflow:hidden">Базовая цена</div>
<div class="t" style="left:593px;top:297px;width:95px;overflow:hidden">% наценки</div>
<div class="t" style="left:696px;top:297px;width:142px;overflow:hidden">Цена</div>
<div class="t" style="left:846px;top:297px;width:142px;overflow:hidden">Сумма</div>
<div class="t" style="left:996px;top:297px;width:117px;overflow:hidden">% НДС</div>
<div class="t" style="left:1121px;top:297px;width:142px;overflow:hidden">Сумма НДС</div>
<div class="t" style="left:1271px;top:297px;width:142px;overflow:hidden">Всего</div>
<div class="t" style="left:1421px;top:297px;width:92px;overflow:hidden">Счет учета (<svg style="margin-left:1px" width="6" height="2"><g fill="#4A3A1C"><rect x="0" y="0" width="1.2" height="1.3"/><rect x="2.2" y="0" width="1.2" height="1.3"/><rect x="4.4" y="0" width="1.2" height="1.3"/></g></svg></div>
<div class="t" style="left:1521px;top:297px;width:92px;overflow:hidden">Счет доходо<svg style="margin-left:1px" width="6" height="2"><g fill="#4A3A1C"><rect x="0" y="0" width="1.2" height="1.3"/><rect x="2.2" y="0" width="1.2" height="1.3"/><rect x="4.4" y="0" width="1.2" height="1.3"/></g></svg></div>
<div class="t" style="left:1621px;top:297px;width:18px;overflow:hidden">С<svg style="margin-left:1px" width="6" height="2"><g fill="#4A3A1C"><rect x="0" y="0" width="1.2" height="1.3"/><rect x="2.2" y="0" width="1.2" height="1.3"/><rect x="4.4" y="0" width="1.2" height="1.3"/></g></svg></div>
<div class="t" style="left:1647px;top:297px;width:92px;overflow:hidden">Счет учета <svg style="margin-left:1px" width="6" height="2"><g fill="#4A3A1C"><rect x="0" y="0" width="1.2" height="1.3"/><rect x="2.2" y="0" width="1.2" height="1.3"/><rect x="4.4" y="0" width="1.2" height="1.3"/></g></svg></div>
<div class="t" style="left:1747px;top:297px;width:93px;overflow:hidden">Счет расход<svg style="margin-left:1px" width="6" height="2"><g fill="#4A3A1C"><rect x="0" y="0" width="1.2" height="1.3"/><rect x="2.2" y="0" width="1.2" height="1.3"/><rect x="4.4" y="0" width="1.2" height="1.3"/></g></svg></div>
<div class="a" style="left:56px;top:318px;width:277px;height:21px;background:#5468C4;outline:1px dotted #C8A850;outline-offset:-1px"></div>
<div class="t" style="right:1870px;top:321px;color:#3A3A3A;">1</div>
<div class="t" style="left:61px;top:321px;color:#FFFFFF;">Сиримол сироп <span class=n>100</span>мл</div>
<div class="t" style="right:1442px;top:321px;color:#000;letter-spacing:-0.9px;word-spacing:1.5px;">15,00000</div>
<div class="t" style="right:1338px;top:321px;color:#000;letter-spacing:-0.9px;word-spacing:1.5px;">26 812,00</div>
<div class="t" style="right:1235px;top:321px;color:#000;letter-spacing:-0.9px;word-spacing:1.5px;">15,00</div>
<div class="t" style="right:1085px;top:321px;color:#000;letter-spacing:-0.9px;word-spacing:1.5px;">30 833,80</div>
<div class="t" style="right:935px;top:321px;color:#000;letter-spacing:-0.9px;word-spacing:1.5px;">462 507,00</div>
<div class="t" style="left:996px;top:321px;color:#000;">Без НДС</div>
<div class="t" style="right:510px;top:321px;color:#000;letter-spacing:-0.9px;word-spacing:1.5px;">462 507,00</div>
<div class="t" style="left:1421px;top:321px;color:#000;letter-spacing:-0.9px;word-spacing:1.5px;">2910</div>
<div class="t" style="left:1521px;top:321px;color:#000;letter-spacing:-0.9px;word-spacing:1.5px;">9020.2</div>
<div class="t" style="left:1647px;top:321px;color:#000;letter-spacing:-0.9px;word-spacing:1.5px;">6410</div>
<div class="t" style="left:1747px;top:321px;color:#000;letter-spacing:-0.9px;word-spacing:1.5px;">9120.2</div>
<div class="a" style="left:1897px;top:46px;width:1px;height:851px;background:#FFFBED"></div>
<div class="a" style="left:1898px;top:46px;width:1px;height:851px;background:#ADA57C"></div>
<div class="a" style="left:1899px;top:46px;width:19px;height:25px;background:linear-gradient(90deg,#F6F5EC 0%,#F1EDD6 40%,#E9E2C4 90%,#DCD3AE 100%)"></div>
<div class="a" style="left:1899px;top:71px;width:19px;height:1px;background:#B4AC88"></div>
<svg class="a" style="left:1904px;top:53px" width="9" height="9"><path d="M4.5 0L9 9H0z" fill="#CBC8BA"/></svg>
<div class="a" style="left:1899px;top:72px;width:19px;height:673px;background:linear-gradient(90deg,#F6F5EC 0%,#F1EDD6 40%,#E9E2C4 90%,#DCD3AE 100%)"></div>
<div class="a" style="left:1899px;top:745px;width:19px;height:1px;background:#B4AC88"></div>
<svg class="a" style="left:1905px;top:406px" width="8" height="7"><path d="M1.6 6.2V4.6A3 3 0 0 1 4.6 1.6H6.6" stroke="#CBC6AE" stroke-width="2.2" fill="none" stroke-linecap="round"/></svg>
<div class="a" style="left:1899px;top:746px;width:19px;height:125px;background:#F8F7F3"></div>
<div class="a" style="left:1899px;top:871px;width:19px;height:1px;background:#B4AC88"></div>
<div class="a" style="left:1899px;top:872px;width:19px;height:25px;background:linear-gradient(90deg,#F6F5EC 0%,#F1EDD6 40%,#E9E2C4 90%,#DCD3AE 100%)"></div>
<svg class="a" style="left:1904px;top:881px" width="9" height="9"><defs><linearGradient id="dg" x1="0" y1="0" x2="0" y2="1"><stop offset="0" stop-color="#4A4A52"/><stop offset="1" stop-color="#B8B8BC"/></linearGradient></defs><path d="M0 0h9L4.5 9z" fill="url(#dg)"/></svg>
</body></html>
